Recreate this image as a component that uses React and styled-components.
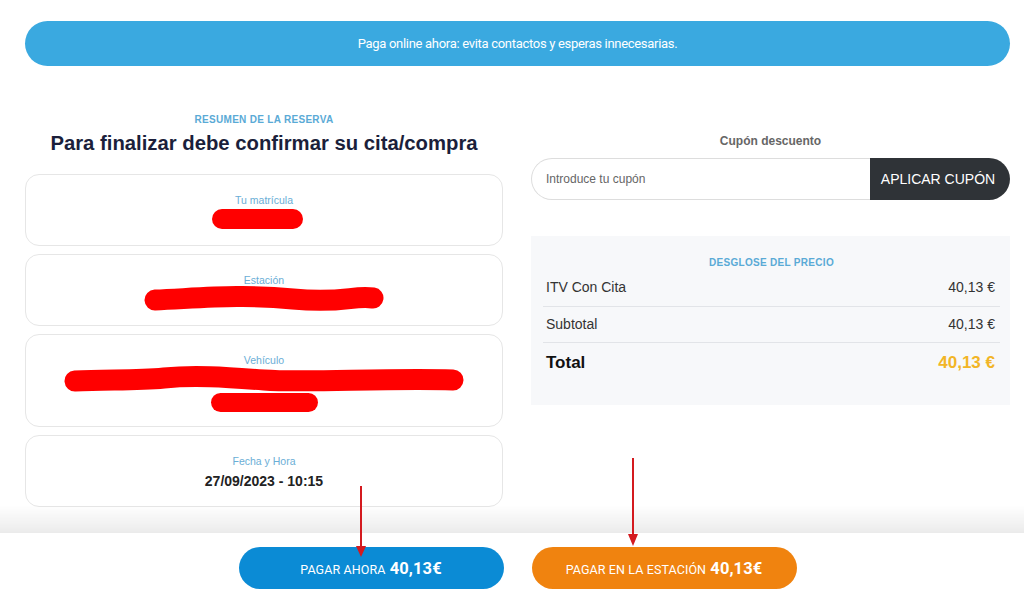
import React from "react";
import styled, { createGlobalStyle } from "styled-components";

const GlobalStyle = createGlobalStyle`
	* {
		box-sizing: border-box;
	}
	body {
		margin: 0;
		background: #fff;
		font-family: "Liberation Sans", Arial, sans-serif;
		color: #333;
	}
`;

function App() {
	return (
		<>
			<GlobalStyle />
			<Page>
				<Banner>Paga online ahora: evita contactos y esperas innecesarias.</Banner>
				<Columns>
					<Summary>
						<Eyebrow>RESUMEN DE LA RESERVA</Eyebrow>
						<Title>Para finalizar debe confirmar su cita/compra</Title>
						<Cards>
							<Card>
								<CardLabel>Tu matrícula</CardLabel>
								<Redact w={91} h={20} $shift={-14} />
							</Card>
							<Card>
								<CardLabel>Estación</CardLabel>
								<Scribble width="242" height="20" viewBox="0 0 242 20">
									<path d="M12 11 C60 9 100 5 150 10 S210 6 230 9" />
								</Scribble>
							</Card>
							<Card $tall>
								<CardLabel>Vehículo</CardLabel>
								<Scribble width="400" height="22" viewBox="0 0 400 22">
									<path d="M11 12 C40 10 70 12 100 9 S160 8 200 11 S320 9 389 11" />
								</Scribble>
								<Redact w={107} h={19} $gap={2} />
							</Card>
							<Card>
								<CardLabel>Fecha y Hora</CardLabel>
								<CardValue>27/09/2023 - 10:15</CardValue>
							</Card>
						</Cards>
					</Summary>
					<Side>
						<CouponLabel>Cupón descuento</CouponLabel>
						<CouponForm>
							<CouponInput placeholder="Introduce tu cupón" />
							<CouponButton>APLICAR CUPÓN</CouponButton>
						</CouponForm>
						<PriceBox>
							<PriceTitle>DESGLOSE DEL PRECIO</PriceTitle>
							<PriceRow>
								<span>ITV Con Cita</span>
								<span>40,13 €</span>
							</PriceRow>
							<PriceRow>
								<span>Subtotal</span>
								<span>40,13 €</span>
							</PriceRow>
							<PriceRow $total>
								<span>Total</span>
								<TotalAmount>40,13 €</TotalAmount>
							</PriceRow>
						</PriceBox>
					</Side>
				</Columns>
			</Page>
			<Footer>
				<PayButton $color="#0b8bd5">
					PAGAR AHORA <strong>40,13€</strong>
				</PayButton>
				<PayButton $color="#f0830f">
					PAGAR EN LA ESTACIÓN <strong>40,13€</strong>
				</PayButton>
			</Footer>
			<Arrow $x={355} $y={486} width="12" height="72" viewBox="0 0 12 72">
				<line x1="6" y1="0" x2="6" y2="62" />
				<polygon points="1,60 11,60 6,71" />
			</Arrow>
			<Arrow $x={627} $y={458} width="12" height="90" viewBox="0 0 12 90">
				<line x1="6" y1="0" x2="6" y2="78" />
				<polygon points="1,76 11,76 6,88" />
			</Arrow>
		</>
	);
}

export default App;

const Page = styled.div`
	padding: 21px 14px 120px 25px;
`;

const Banner = styled.div`
	height: 45px;
	border-radius: 23px;
	background: #3aa9e0;
	color: #fff;
	font-family: Roboto, sans-serif;
	font-size: 13px;
	letter-spacing: -0.3px;
	display: flex;
	align-items: center;
	justify-content: center;
`;

const Columns = styled.div`
	margin-top: 46px;
	display: grid;
	grid-template-columns: 478px 479px;
	column-gap: 28px;
	align-items: start;
`;

const Summary = styled.section`
	display: flex;
	flex-direction: column;
	align-items: center;
`;

const Eyebrow = styled.div`
	font-size: 10px;
	line-height: 16px;
	font-weight: 700;
	color: #5aaad6;
	letter-spacing: 0.3px;
`;

const Title = styled.h1`
	margin: 2px 0 0;
	font-size: 20.3px;
	line-height: 26px;
	font-weight: 700;
	color: #1b1f3b;
`;

const Cards = styled.div`
	margin-top: 18px;
	width: 100%;
	display: flex;
	flex-direction: column;
	gap: 8px;
`;

const Card = styled.div`
	border: 1px solid #e6e6e6;
	border-radius: 14px;
	padding: 18px 16px ${({ $tall }) => ($tall ? "14px" : "16px")};
	display: flex;
	flex-direction: column;
	align-items: center;
	min-height: 72px;
`;

const CardLabel = styled.div`
	font-size: 10.5px;
	line-height: 14px;
	color: #6aaed6;
	margin-bottom: 2px;
`;

const CardValue = styled.div`
	margin-top: 2px;
	font-size: 14px;
	line-height: 18px;
	font-weight: 700;
	color: #222;
`;

const Redact = styled.span`
	display: block;
	width: ${({ w }) => w}px;
	height: ${({ h }) => h}px;
	margin-top: ${({ $gap }) => $gap || 0}px;
	margin-left: ${({ $shift }) => $shift || 0}px;
	border-radius: 10px;
	background: #f00;
`;

const Scribble = styled.svg`
	display: block;
	overflow: visible;
	path {
		fill: none;
		stroke: #f00;
		stroke-width: 21;
		stroke-linecap: round;
	}
`;

const Side = styled.section`
	padding-top: 21px;
	display: flex;
	flex-direction: column;
`;

const CouponLabel = styled.div`
	text-align: center;
	font-size: 12px;
	line-height: 16px;
	font-weight: 700;
	color: #666;
`;

const CouponForm = styled.div`
	margin-top: 9px;
	height: 42px;
	display: flex;
`;

const CouponInput = styled.input`
	flex: 1;
	min-width: 0;
	border: 1px solid #ddd;
	border-right: none;
	border-radius: 21px 0 0 21px;
	padding: 0 14px;
	font-family: "Liberation Sans", Arial, sans-serif;
	font-size: 12px;
	outline: none;
	&::placeholder {
		color: #666;
	}
`;

const CouponButton = styled.button`
	width: 140px;
	border: none;
	border-radius: 0 21px 21px 0;
	background: #2f3337;
	color: #fff;
	font-family: "Liberation Sans", Arial, sans-serif;
	font-size: 14px;
	padding: 0 4px 0 0;
`;

const PriceBox = styled.div`
	margin-top: 36px;
	background: #f7f8fa;
	padding: 21px 10px 23px 12px;
	display: flex;
	flex-direction: column;
`;

const PriceTitle = styled.div`
	text-align: center;
	font-size: 10px;
	line-height: 12px;
	font-weight: 700;
	color: #5aaad6;
	letter-spacing: 0.3px;
`;

const PriceRow = styled.div`
	height: ${({ $total }) => ($total ? "40px" : "36.5px")};
	padding: 0 5px 0 3px;
	display: flex;
	align-items: center;
	justify-content: space-between;
	font-size: ${({ $total }) => ($total ? "17px" : "14px")};
	font-weight: ${({ $total }) => ($total ? 700 : 400)};
	color: ${({ $total }) => ($total ? "#111" : "#333")};
	& + & {
		border-top: 1px solid #e2e4e8;
	}
`;

const TotalAmount = styled.span`
	color: #f2b526;
`;

const Footer = styled.footer`
	position: fixed;
	left: 0;
	right: 0;
	bottom: 0;
	height: 78px;
	background: #fff;
	display: flex;
	align-items: flex-start;
	justify-content: center;
	gap: 28px;
	padding: 14px 0 0 11px;
	&::before {
		content: "";
		position: absolute;
		left: 0;
		right: 0;
		top: -28px;
		height: 28px;
		background: linear-gradient(rgba(0, 0, 0, 0), rgba(0, 0, 0, 0.08));
	}
`;

const PayButton = styled.button`
	width: 265px;
	height: 42px;
	border: none;
	border-radius: 21px;
	background: ${({ $color }) => $color};
	color: #fff;
	font-family: Roboto, sans-serif;
	font-size: 12.5px;
	letter-spacing: 0.1px;
	strong {
		font-size: 16.5px;
		font-weight: 700;
		margin-left: 1px;
	}
`;

const Arrow = styled.svg`
	position: fixed;
	left: ${({ $x }) => $x}px;
	top: ${({ $y }) => $y}px;
	line {
		stroke: #d41a1f;
		stroke-width: 2;
	}
	polygon {
		fill: #d41a1f;
	}
`;
